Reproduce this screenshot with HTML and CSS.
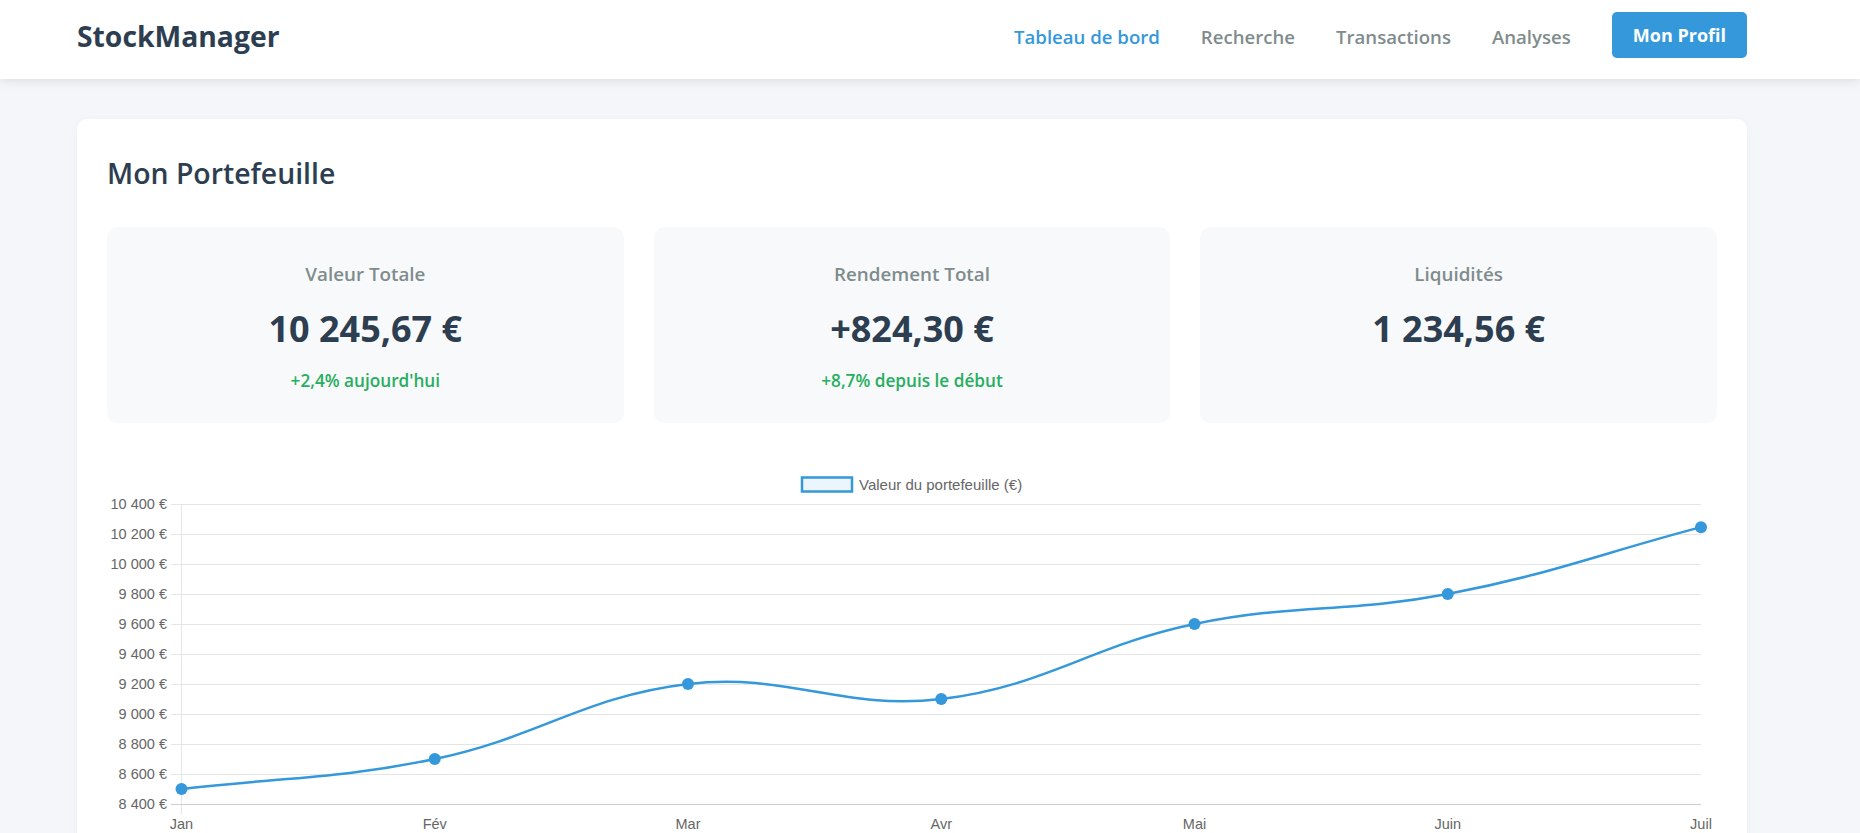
FILE: index.html
```html
<!DOCTYPE html>
<html lang="fr">
<head>
<meta charset="utf-8">
<title>StockManager</title>
<link rel="stylesheet" href="styles.css">
</head>
<body>
<header class="navbar">
  <div class="container nav-inner">
    <div class="logo">StockManager</div>
    <nav class="nav-links">
      <a class="nav-link active" href="#">Tableau de bord</a>
      <a class="nav-link" href="#">Recherche</a>
      <a class="nav-link" href="#">Transactions</a>
      <a class="nav-link" href="#">Analyses</a>
      <a class="btn-profile" href="#">Mon Profil</a>
    </nav>
  </div>
</header>

<main class="container">
  <section class="card">
    <h2 class="card-title">Mon Portefeuille</h2>
    <div class="stats">
      <div class="stat-card">
        <p class="stat-label">Valeur Totale</p>
        <p class="stat-value">10 245,67 €</p>
        <p class="stat-change">+2,4% aujourd'hui</p>
      </div>
      <div class="stat-card">
        <p class="stat-label">Rendement Total</p>
        <p class="stat-value">+824,30 €</p>
        <p class="stat-change">+8,7% depuis le début</p>
      </div>
      <div class="stat-card">
        <p class="stat-label">Liquidités</p>
        <p class="stat-value">1 234,56 €</p>
      </div>
    </div>

    <div class="chart-wrap">
      <svg class="chart" viewBox="107 463 1610 380" xmlns="http://www.w3.org/2000/svg">
        <g class="legend">
          <rect x="802" y="477.5" width="50" height="14" fill="#ebf5fb" stroke="#3498db" stroke-width="2.5"/>
          <text x="859" y="489.5" class="lbl legend-text">Valeur du portefeuille (€)</text>
        </g>
        <g class="grid" stroke="#e5e5e5" stroke-width="1">
          <line x1="171" y1="504.5" x2="1701" y2="504.5"/>
          <line x1="171" y1="534.5" x2="1701" y2="534.5"/>
          <line x1="171" y1="564.5" x2="1701" y2="564.5"/>
          <line x1="171" y1="594.5" x2="1701" y2="594.5"/>
          <line x1="171" y1="624.5" x2="1701" y2="624.5"/>
          <line x1="171" y1="654.5" x2="1701" y2="654.5"/>
          <line x1="171" y1="684.5" x2="1701" y2="684.5"/>
          <line x1="171" y1="714.5" x2="1701" y2="714.5"/>
          <line x1="171" y1="744.5" x2="1701" y2="744.5"/>
          <line x1="171" y1="774.5" x2="1701" y2="774.5"/>
          <line x1="181.5" y1="504" x2="181.5" y2="814"/>
        </g>
        <line x1="171" y1="804.5" x2="1701" y2="804.5" stroke="#cfcfcf" stroke-width="1"/>
        <g class="ylabels" text-anchor="end">
          <text x="167" y="509" class="lbl">10 400 €</text>
          <text x="167" y="539" class="lbl">10 200 €</text>
          <text x="167" y="569" class="lbl">10 000 €</text>
          <text x="167" y="599" class="lbl">9 800 €</text>
          <text x="167" y="629" class="lbl">9 600 €</text>
          <text x="167" y="659" class="lbl">9 400 €</text>
          <text x="167" y="689" class="lbl">9 200 €</text>
          <text x="167" y="719" class="lbl">9 000 €</text>
          <text x="167" y="749" class="lbl">8 800 €</text>
          <text x="167" y="779" class="lbl">8 600 €</text>
          <text x="167" y="809" class="lbl">8 400 €</text>
        </g>
        <g class="xlabels" text-anchor="middle">
          <text x="181.5" y="829" class="lbl">Jan</text>
          <text x="434.75" y="829" class="lbl">Fév</text>
          <text x="688" y="829" class="lbl">Mar</text>
          <text x="941.25" y="829" class="lbl">Avr</text>
          <text x="1194.5" y="829" class="lbl">Mai</text>
          <text x="1447.75" y="829" class="lbl">Juin</text>
          <text x="1701" y="829" class="lbl">Juil</text>
        </g>
        <path d="M181.5 789 C282.8 777 335.23 779.63 434.75 759 C537.83 737.63 584.66 696.24 688 684 C787.26 672.24 841.99 710.76 941.25 699 C1044.59 686.76 1091.42 645.37 1194.5 624 C1294.02 603.37 1347.8 613.11 1447.75 594 C1550.4 574.37 1599.7 553.89 1701 527.15" fill="none" stroke="#3498db" stroke-width="2.5"/>
        <g fill="#3498db">
          <circle cx="181.5" cy="789" r="6"/>
          <circle cx="434.75" cy="759" r="6"/>
          <circle cx="688" cy="684" r="6"/>
          <circle cx="941.25" cy="699" r="6"/>
          <circle cx="1194.5" cy="624" r="6"/>
          <circle cx="1447.75" cy="594" r="6"/>
          <circle cx="1701" cy="527.15" r="6"/>
        </g>
      </svg>
    </div>
  </section>
</main>
</body>
</html>
```

FILE: styles.css
```css
* { box-sizing: border-box; }

body {
  margin: 0;
  background: #f4f6f9;
  font-family: "Open Sans", "Noto Sans", sans-serif;
  color: #2c3e50;
}

.container {
  width: 1670px;
  margin-left: 77px;
}

.navbar {
  background: #ffffff;
  height: 79px;
  box-shadow: 0 2px 10px rgba(0, 0, 0, 0.1);
  position: relative;
}

.nav-inner {
  height: 100%;
  display: flex;
  align-items: center;
  justify-content: space-between;
  padding-bottom: 7px;
}

.logo {
  font-size: 28.3px;
  font-weight: 700;
  color: #2c3e50;
}

.nav-links {
  display: flex;
  align-items: center;
  gap: 41px;
}

.nav-link {
  text-decoration: none;
  color: #7f8c8d;
  font-size: 18.6px;
  font-weight: 600;
}

.nav-link.active { color: #3498db; }

.btn-profile {
  text-decoration: none;
  background: #3498db;
  color: #ffffff;
  font-size: 18px;
  font-weight: 700;
  padding: 10px 21px;
  border-radius: 5px;
  line-height: 26px;
  margin-bottom: 2px;
}

.card {
  background: #ffffff;
  margin-top: 40px;
  border-radius: 10px;
  padding: 33px 30px 0;
  box-shadow: 0 2px 10px rgba(0, 0, 0, 0.04);
  height: 740px;
}

.card-title {
  margin: 0 0 32px;
  font-size: 28.4px;
  font-weight: 600;
  line-height: 43px;
  color: #2c3e50;
}

.stats {
  display: grid;
  grid-template-columns: repeat(3, 1fr);
  gap: 30px;
}

.stat-card {
  background: #f8f9fa;
  border-radius: 10px;
  padding: 34px 20px 30px;
  text-align: center;
  height: 196px;
}

.stat-card p { margin: 0; }

.stat-label {
  font-size: 18.8px;
  font-weight: 600;
  line-height: 26px;
  color: #7f8c8d;
  margin-bottom: 20px !important;
}

.stat-value {
  font-size: 36px;
  font-weight: 700;
  line-height: 44px;
  color: #2c3e50;
  margin-bottom: 18px !important;
}

.stat-change {
  font-size: 17.2px;
  font-weight: 600;
  line-height: 24px;
  color: #27ae60;
}

.chart-wrap { margin-top: 40px; }

.chart {
  display: block;
  width: 1610px;
  height: 380px;
}

.lbl {
  font-family: "Liberation Sans", Arial, sans-serif;
  font-size: 14.5px;
  fill: #666666;
}

.legend-text { font-size: 15px; }
```
